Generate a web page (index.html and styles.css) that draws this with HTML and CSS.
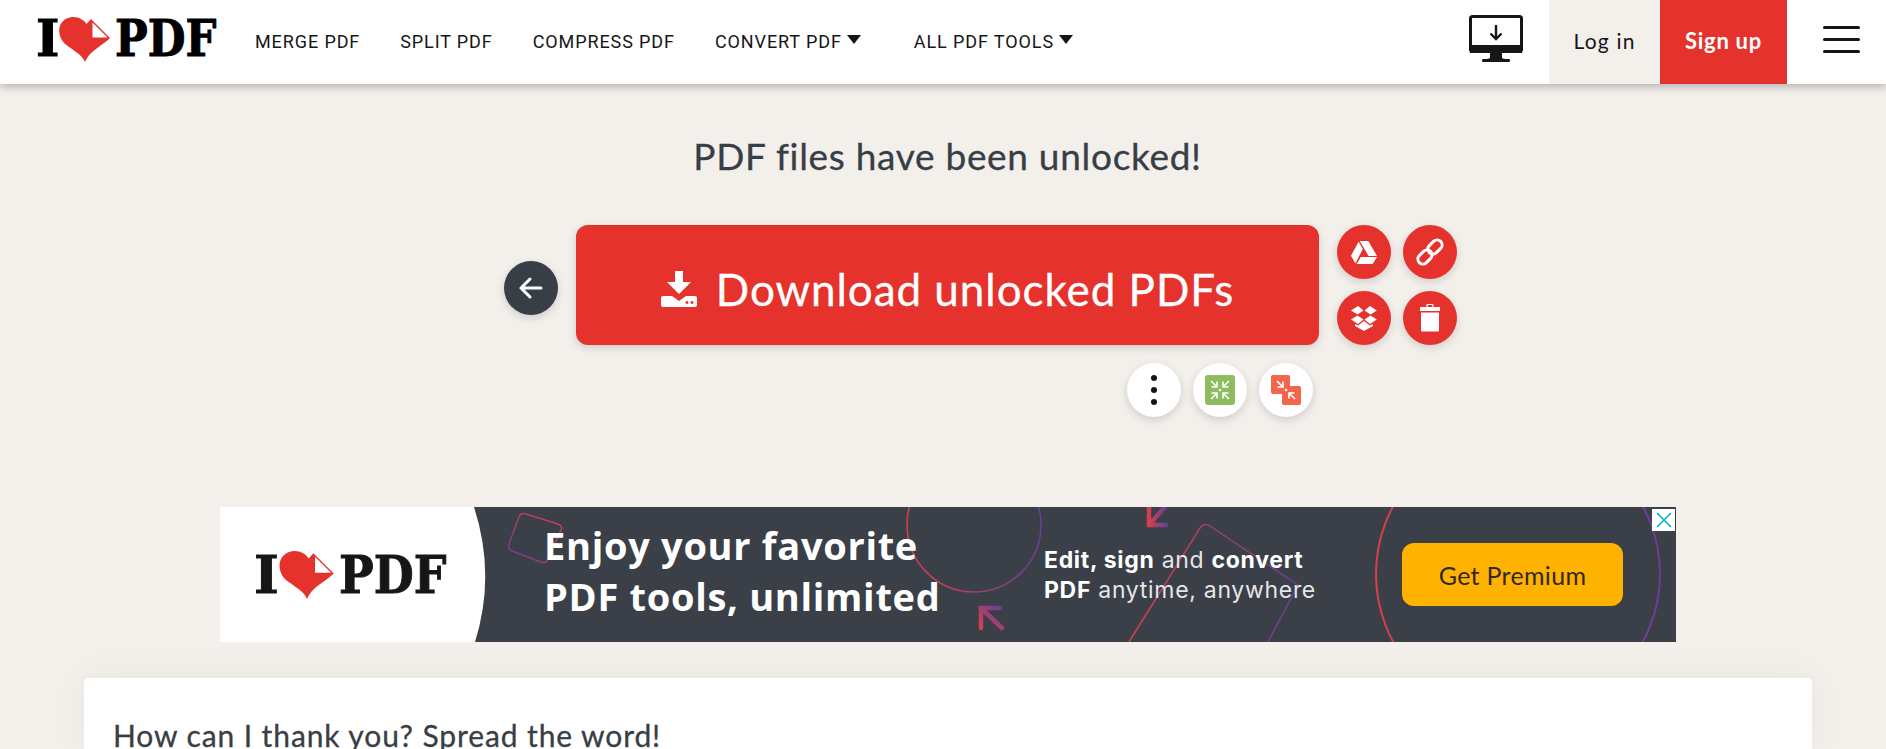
FILE: index.html
```html
<!DOCTYPE html>
<html lang="en">
<head>
  <meta charset="UTF-8">
  <title>PDF files have been unlocked!</title>
  <link rel="stylesheet" href="styles.css">
</head>
<body>
  <header class="topbar">
    <a class="logo" href="#">
      <span class="logo-i">I</span>
      <svg class="logo-heart" viewBox="0 0 51 45"><path fill="#e5322d" d="M26 45C23 37 13 33 5 26C-3 17-1 3 11 .5C18-1 24 2 27.500 7L32 2L51 21C43 29 30 34 26 45Z"/><path fill="#fff" d="M33.500 5.500V20.500H48.500Z"/></svg>
      <span class="logo-pdf">PDF</span>
    </a>
    <nav class="nav">
      <a href="#">MERGE PDF</a>
      <a href="#">SPLIT PDF</a>
      <a href="#">COMPRESS PDF</a>
      <a href="#" class="has-caret">CONVERT PDF</a>
      <a href="#" class="has-caret">ALL PDF TOOLS</a>
    </nav>
    <div class="top-actions">
      <svg class="desktop-icon" viewBox="0 0 54 47">
        <rect x="1.500" y="1.500" width="51" height="35" rx="2" fill="#fff" stroke="#161616" stroke-width="3"/>
        <rect x="1" y="30" width="52" height="8" fill="#161616"/>
        <path fill="#161616" d="M21 38H33V42.500Q33 44 40 44Q41 44 41 45.500Q41 47 40 47H14Q13 47 13 45.500Q13 44 14 44Q21 44 21 42.500Z"/>
        <path fill="none" stroke="#161616" stroke-width="2.400" d="M27 10V24M21.500 18.500L27 24L32.500 18.500"/>
      </svg>
      <a href="#" class="login">Log in</a>
      <a href="#" class="signup">Sign up</a>
      <button class="burger"><span></span><span></span><span></span></button>
    </div>
  </header>

  <main class="content">
    <h1>PDF files have been unlocked!</h1>

    <div class="result">
      <a href="#" class="round dark back">
        <svg width="24" height="24" viewBox="0 0 24 24" fill="none" stroke="#fff" stroke-width="3" stroke-linecap="round" stroke-linejoin="round"><path d="M2 12H22M11 3L2 12L11 21"/></svg>
      </a>
      <a href="#" class="download">
        <svg width="36" height="36" viewBox="0 0 36 36" fill="#fff"><path d="M14 0H22V11H30L18 23L6 11H14Z"/><path fill-rule="evenodd" d="M2 25H11L18 30L25 25H34Q36 25 36 27V34Q36 36 34 36H2Q0 36 0 34V27Q0 25 2 25ZM26 30a1.500 1.500 0 1 0 .01 0ZM31 30a1.500 1.500 0 1 0 .01 0Z"/></svg>
        <span class="download-label">Download unlocked PDFs</span>
      </a>
      <div class="side-actions">
        <a href="#" class="round red">
          <svg width="26" height="23" viewBox="0 0 26 23" fill="#fff"><path d="M8.700 0H17.300L26 15H17.600Z"/><path d="M7.600 .8L11.800 8L4.400 22.400L0 14.800Z"/><path d="M9.800 16H26L21.600 23H5.600Z"/></svg>
        </a>
        <a href="#" class="round red">
          <svg width="30" height="30" viewBox="0 0 30 30" fill="none" stroke="#fff" stroke-width="3"><rect x="15" y="2" width="10" height="16" rx="5" transform="rotate(45 20 10)"/><rect x="5" y="12" width="10" height="16" rx="5" transform="rotate(45 10 20)"/></svg>
        </a>
        <a href="#" class="round red">
          <svg width="26" height="25" viewBox="0 0 26 25" fill="#fff"><path d="M7 0L12.500 4.500L6.500 8.500L0 4.500Z"/><path d="M19 0L25.800 4.500L19.500 8.500L13.500 4.500Z"/><path d="M6.500 9.500L12.500 13.500L7 18L0 13.500Z"/><path d="M19.500 9.500L25.800 13.500L19 18L13.500 13.500Z"/><path d="M13 15L19 19.500L22 18V20L13 25L4 20V18L7 19.500Z"/></svg>
        </a>
        <a href="#" class="round red">
          <svg width="20" height="28" viewBox="0 0 20 28" fill="#fff"><path d="M7 3V1.500Q7 .5 8 .5H12Q13 .5 13 1.500V3" fill="none" stroke="#fff" stroke-width="1.200"/><rect y="3" width="20" height="4"/><path d="M1 8.500H19V26.500Q19 27.500 18 27.500H2Q1 27.500 1 26.500Z"/></svg>
        </a>
      </div>
      <div class="more-tools">
        <a href="#" class="round white">
          <svg width="6" height="30" viewBox="0 0 6 30" fill="#161616"><circle cx="3" cy="3" r="3"/><circle cx="3" cy="15" r="3"/><circle cx="3" cy="27" r="3"/></svg>
        </a>
        <a href="#" class="round white">
          <svg width="30" height="30" viewBox="0 0 30 30"><rect width="30" height="30" rx="3" fill="#8fbc5e"/><g fill="none" stroke="#fff" stroke-width="1.600"><path d="M6 6L12 12M6.500 12H12V6.500M24 6L18 12M23.500 12H18V6.500M6 24L12 18M6.500 18H12V23.500M24 24L18 18M23.500 18H18V23.500"/></g><circle cx="15" cy="15" r="1.300" fill="#fff"/></svg>
        </a>
        <a href="#" class="round white">
          <svg width="30" height="30" viewBox="0 0 30 30"><rect width="19" height="19" rx="2" fill="#f0674c"/><rect x="11" y="11" width="19" height="19" rx="2" fill="#f0674c"/><g fill="none" stroke="#fff" stroke-width="1.600"><path d="M6 6L12 12M6.500 12H12V6.500M24 24L18 18M23.500 18H18V23.500"/></g><circle cx="15" cy="15" r="1.300" fill="#fff"/></svg>
        </a>
      </div>
    </div>

    <aside class="ad">
      <svg class="ad-art" width="1456" height="135" viewBox="0 0 1456 135" fill="none">
        <defs>
          <linearGradient id="rp" x1="0" y1="0" x2="1" y2="0"><stop offset="0" stop-color="#d5404a"/><stop offset="1" stop-color="#6a3f96"/></linearGradient>
          <linearGradient id="rp2" x1="1" y1="0" x2="0" y2="1"><stop offset="0" stop-color="#d5404a"/><stop offset="1" stop-color="#6a3f96"/></linearGradient>
          <linearGradient id="rp3" x1="0" y1="1" x2="1" y2="0"><stop offset="0" stop-color="#d5404a"/><stop offset="1" stop-color="#6a3f96"/></linearGradient>
        </defs>
        <path fill="#fff" d="M0 0H254Q276 68 255 135H0Z"/>
        <path stroke="url(#rp2)" stroke-width="1.500" d="M306 7L338 17Q343 19 341 23L328 52Q326 57 321 55L292 44Q287 42 289 37L299 10Q301 5 306 7Z"/>
        <circle cx="754" cy="18" r="67" stroke="url(#rp)" stroke-width="1.500"/>
        <path stroke="url(#rp)" stroke-width="1.500" d="M909 135L980 21Q984 15 990 19L1078 78L1048 135"/>
        <circle cx="1298" cy="67" r="142" stroke="url(#rp)" stroke-width="2"/>
        <path stroke="url(#rp)" stroke-width="4.500" stroke-linecap="round" d="M929 0V18H946M929 18L945 0"/>
        <path stroke="url(#rp3)" stroke-width="4.500" stroke-linecap="round" d="M780 101H761V121M761 101L782 121"/>
      </svg>
      <div class="logo ad-logo">
        <span class="logo-i">I</span>
        <svg class="logo-heart" viewBox="0 0 51 45"><path fill="#e5322d" d="M26 45C23 37 13 33 5 26C-3 17-1 3 11 .5C18-1 24 2 27.500 7L32 2L51 21C43 29 30 34 26 45Z"/><path fill="#fff" d="M33.500 5.500V20.500H48.500Z"/></svg>
        <span class="logo-pdf">PDF</span>
      </div>
      <p class="ad-title">Enjoy your favorite<br>PDF tools, unlimited</p>
      <p class="ad-text"><b>Edit, sign</b> and <b>convert</b><br><b>PDF</b> anytime, anywhere</p>
      <a href="#" class="ad-btn">Get Premium</a>
      <span class="ad-close"><svg width="16" height="16" viewBox="0 0 16 16" stroke="#00aecd" stroke-width="1.500"><path d="M1 1L15 15M15 1L1 15"/></svg></span>
    </aside>

    <section class="card">
      <h2>How can I thank you? Spread the word!</h2>
    </section>
  </main>
</body>
</html>
```

FILE: styles.css
```css
html, body {
  margin: 0;
  height: 749px;
  overflow: hidden;
}

body {
  background: #f3f0ec;
  font-family: "Lato", sans-serif;
  color: #383e45;
}

a {
  color: inherit;
  text-decoration: none;
}

.topbar {
  height: 84px;
  background: #fff;
  box-shadow: 0 3px 8px rgba(0, 0, 0, 0.25);
  display: flex;
  align-items: center;
  padding-left: 36px;
  position: relative;
}

.logo {
  display: flex;
  align-items: center;
  font-family: "DejaVu Serif", serif;
  font-weight: 700;
  font-size: 50px;
  line-height: 1;
  color: #000;
  width: 180px;
  margin-top: -6px;
  -webkit-text-stroke: 1px #000;
}

.logo-i {
  width: 24px;
}

.logo-heart {
  width: 51px;
  height: 45px;
  flex: none;
}

.logo-pdf {
  display: inline-block;
  margin-left: 5px;
  transform: scaleX(0.87);
  transform-origin: left center;
}

.nav {
  display: flex;
  align-items: center;
  margin: -2px 0 0 39px;
  font-family: "Roboto", sans-serif;
  font-size: 18px;
  letter-spacing: 0.9px;
  color: #161616;
}

.nav a {
  margin-right: 40px;
}

.has-caret::after {
  content: "";
  display: inline-block;
  border: 7px solid transparent;
  border-top: 9px solid #161616;
  border-bottom: 0;
  margin-left: 5px;
  vertical-align: 4px;
}

.nav a.has-caret {
  margin-right: 53px;
}

.top-actions {
  margin-left: auto;
  height: 84px;
  display: flex;
  align-items: center;
}

.desktop-icon {
  width: 54px;
  height: 47px;
  margin: -8px 26px 0 0;
}

.login, .signup {
  box-sizing: border-box;
  height: 84px;
  padding-bottom: 3px;
  display: flex;
  align-items: center;
  justify-content: center;
}

.login {
  width: 111px;
  background: #f3f0ec;
  color: #161616;
  font-size: 21px;
  letter-spacing: 1.2px;
}

.signup {
  width: 127px;
  background: #e5322d;
  color: #fff;
  font-size: 22px;
  letter-spacing: 0.7px;
  font-weight: 700;
}

.burger {
  width: 37px;
  margin: -6px 26px 0 36px;
  padding: 0;
  border: 0;
  background: none;
  display: flex;
  flex-direction: column;
  gap: 9px;
}

.burger span {
  height: 3px;
  border-radius: 2px;
  background: #161616;
}

.content {
  padding: 52px 0 0 9px;
}

h1 {
  margin: 0;
  font-size: 37px;
  line-height: 40px;
  font-weight: 400;
  text-align: center;
  letter-spacing: 0.7px;
  -webkit-text-stroke: 0.3px #383e45;
}

.result {
  margin-top: 49px;
  display: grid;
  grid-template-columns: 1fr 743px 1fr;
  column-gap: 18px;
  row-gap: 18px;
}

.round {
  width: 54px;
  height: 54px;
  border-radius: 50%;
  display: flex;
  align-items: center;
  justify-content: center;
  box-shadow: 0 3px 8px rgba(0, 0, 0, 0.15);
}

.dark { background: #383e45; }
.red { background: #e5322d; }
.white { background: #fff; }

.back {
  justify-self: end;
  align-self: center;
  margin-top: 6px;
}

.download {
  box-sizing: border-box;
  height: 120px;
  padding-top: 8px;
  border-radius: 12px;
  background: #e5322d;
  color: #fff;
  box-shadow: 0 3px 8px rgba(0, 0, 0, 0.15);
  display: flex;
  align-items: center;
  justify-content: center;
  gap: 19px;
}

.download-label {
  font-size: 44px;
  letter-spacing: 0.95px;
  -webkit-text-stroke: 0.3px #fff;
}

.side-actions {
  display: grid;
  grid-template-columns: 54px 54px;
  gap: 12px;
}

.more-tools {
  grid-column: 2;
  display: flex;
  justify-content: flex-end;
  gap: 12px;
  padding-right: 6px;
}

.ad {
  position: relative;
  width: 1456px;
  height: 135px;
  margin: 90px 0 0 211px;
  background: #3a3f48;
  overflow: hidden;
  display: flex;
  align-items: center;
  color: #fff;
}

.ad-art {
  position: absolute;
  left: 0;
  top: 0;
}

.ad > :not(.ad-art):not(.ad-close) {
  position: relative;
}

.ad-logo {
  margin: 0 0 0 34px;
  width: 190px;
  font-size: 53px;
  color: #161616;
  -webkit-text-stroke: 1px #161616;
}

.ad-logo .logo-i { width: 25px; }
.ad-logo .logo-heart { width: 55px; height: 48px; }

.ad-title {
  margin: 0 0 7px 100px;
  font-family: "Open Sans", sans-serif;
  font-size: 38px;
  font-weight: 700;
  letter-spacing: 0.7px;
  line-height: 51px;
  width: 500px;
}

.ad-text {
  margin: 0;
  font-family: "Inter", sans-serif;
  font-size: 23px;
  letter-spacing: 0.7px;
  line-height: 30px;
  width: 358px;
  color: #e6e6e8;
}

.ad-text b {
  color: #fff;
}

.ad-btn {
  width: 221px;
  height: 63px;
  border-radius: 12px;
  background: #ffb300;
  color: #33291a;
  font-size: 25px;
  letter-spacing: 0.3px;
  display: flex;
  align-items: center;
  justify-content: center;
}

.ad-close {
  position: absolute;
  right: 1px;
  top: 2px;
  width: 23px;
  height: 22px;
  background: #fff;
  display: flex;
  align-items: center;
  justify-content: center;
}

.card {
  box-sizing: border-box;
  margin: 36px 74px 0 75px;
  padding: 43px 29px 0;
  height: 71px;
  border-radius: 4px 4px 0 0;
  background: #fff;
  box-shadow: 0 0 40px rgba(0, 0, 0, 0.05);
}

h2 {
  margin: 0;
  font-size: 30px;
  line-height: 28px;
  font-weight: 400;
  letter-spacing: 0.9px;
  -webkit-text-stroke: 0.3px #383e45;
}
```
